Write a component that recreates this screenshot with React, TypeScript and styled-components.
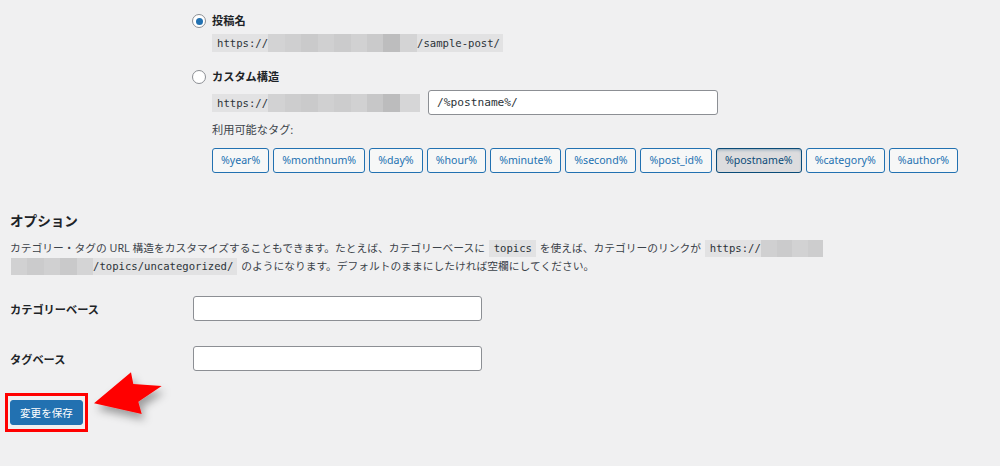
import styled, { createGlobalStyle } from "styled-components";

const GlobalStyle = createGlobalStyle`
    html, body {
        margin: 0;
        padding: 0;
        background: #f0f0f1;
    }
    body {
        font-family: "Noto Sans", "Noto Sans CJK JP", sans-serif;
        color: #1d2327;
    }
    * {
        box-sizing: border-box;
    }
`

const Page = styled.div`
    width: 1000px;
    height: 466px;
    padding: 14px 0 0 10px;
    overflow: hidden;
`

const Choices = styled.fieldset`
    margin: 0 0 0 182px;
    padding: 0;
    border: 0;
    min-width: 0;
`

const RadioRow = styled.label<{ $gap?: number }>`
    display: flex;
    align-items: center;
    gap: 6px;
    height: 14px;
    margin-top: ${(p) => p.$gap ?? 0}px;
    font-size: 11.2px;
    font-weight: 700;
    line-height: 14px;
    color: #1d2327;
`

const Radio = styled.input`
    appearance: none;
    margin: 0;
    width: 14px;
    height: 14px;
    border-radius: 50%;
    border: 1px solid #8c8f94;
    background: #fff;
    display: grid;
    place-items: center;

    &:checked::before {
        content: "";
        width: 7px;
        height: 7px;
        border-radius: 50%;
        background: #2271b1;
    }
`

const Indented = styled.div<{ $gap: number }>`
    display: flex;
    padding-left: 20px;
    margin-top: ${(p) => p.$gap}px;
`

const CustomRow = styled(Indented)`
    align-items: center;
    gap: 8px;
`

const Code = styled.code<{ $width?: number; $tight?: boolean }>`
    display: inline-flex;
    align-items: center;
    height: 18px;
    width: ${(p) => (p.$width ? `${p.$width}px` : "auto")};
    padding: 0 ${(p) => (p.$tight ? 0 : 3)}px 0 5px;
    background: #e2e2e3;
    font-family: "DejaVu Sans Mono", "Liberation Mono", monospace;
    font-size: 10.6px;
    color: #2c3338;
    white-space: pre;
`

const BlurStrip = styled.span`
    display: inline-flex;
    align-self: stretch;
    vertical-align: middle;
`

const BlurCell = styled.span<{ $w: number; $shade: string }>`
    display: inline-block;
    width: ${(p) => p.$w}px;
    height: 100%;
    min-height: 15px;
    background: ${(p) => p.$shade};
`

type Cell = [number, string];

const Blur = ({ cells }: { cells: Cell[] }) => (
    <BlurStrip>
        {cells.map(([w, shade], i) => (
            <BlurCell key={i} $w={w} $shade={shade} />
        ))}
    </BlurStrip>
)

const row1Blur: Cell[] = [
    [17, "#d3d3d4"], [16, "#cfcfd0"], [17, "#cacacb"], [16, "#d0d0d1"],
    [17, "#cbcbcc"], [16, "#d1d1d2"], [16, "#cacacb"], [17, "#bdbdbe"], [17, "#d4d4d5"],
]

const row2Blur: Cell[] = [
    [17, "#d2d2d3"], [16, "#cdcdce"], [17, "#cacacb"], [16, "#d0d0d1"],
    [17, "#cccccd"], [16, "#d1d1d2"], [16, "#c7c7c8"], [17, "#bcbcbd"], [20, "#d6d6d7"],
]

const TextInput = styled.input<{ $width: number }>`
    width: ${(p) => p.$width}px;
    height: 25px;
    margin: 0;
    padding: 0 8px;
    border: 1px solid #8c8f94;
    border-radius: 3px;
    background: #fff;
    font-family: "DejaVu Sans Mono", "Liberation Mono", monospace;
    font-size: 11.2px;
    color: #2c3338;
    outline: none;
`

const TagsLabel = styled(Indented)`
    font-size: 11.2px;
    line-height: 16px;
    color: #3c434a;
`

const TagList = styled(Indented)`
    gap: 4px;
`

const TagButton = styled.button<{ $active?: boolean }>`
    height: 25px;
    margin: 0;
    padding: 0 8px;
    border: 1px solid ${(p) => (p.$active ? "#0a4b78" : "#2271b1")};
    border-radius: 3px;
    background: ${(p) => (p.$active ? "#dcdcde" : "#f6f7f7")};
    box-shadow: ${(p) => (p.$active ? "inset 0 2px 4px -3px #0a4b78" : "none")};
    color: ${(p) => (p.$active ? "#0a4b78" : "#2271b1")};
    font-family: "Noto Sans", sans-serif;
    font-size: 10.6px;
    line-height: 1;
    cursor: pointer;
`

const Heading = styled.h2`
    margin: 38px 0 0;
    font-size: 13.6px;
    font-weight: 700;
    line-height: 20px;
    color: #1d2327;
`

const Description = styled.p`
    margin: 8px 0 0;
    font-size: 10.75px;
    line-height: 18px;
    color: #3c434a;
    white-space: nowrap;
`

const InlineCode = styled.code<{ $open?: "left" | "right" }>`
    display: inline-block;
    height: 17px;
    line-height: 17px;
    padding: 0 ${(p) => (p.$open === "right" ? 0 : 4)}px 0 ${(p) => (p.$open === "left" ? 0 : 5)}px;
    margin: 0 1px;
    background: #e2e2e3;
    font-family: "DejaVu Sans Mono", "Liberation Mono", monospace;
    font-size: 10.6px;
    color: #2c3338;
    white-space: pre;

    & > span {
        height: 17px;
        vertical-align: top;
    }
`

const FormTable = styled.div`
    display: grid;
    grid-template-columns: 183px 1fr;
    align-items: center;
    row-gap: 25px;
    margin-top: 21px;
`

const FieldLabel = styled.label`
    font-size: 11.2px;
    font-weight: 700;
    color: #1d2327;
`

const SaveRow = styled.div`
    position: relative;
    margin: 22px 0 0 -5px;
    width: 200px;
`

const Highlight = styled.div`
    display: inline-block;
    border: 3px solid #ff0000;
    padding: 4px 2px;
`

const SaveButton = styled.button`
    display: block;
    height: 25px;
    padding: 0 9px;
    margin: 0;
    border: 1px solid #2271b1;
    border-radius: 3px;
    background: #2271b1;
    color: #fff;
    font-family: "Noto Sans CJK JP", sans-serif;
    font-size: 10.6px;
    cursor: pointer;
`

const Arrow = styled.svg`
    position: absolute;
    left: 80px;
    top: -28px;
    overflow: visible;
`

const tags = [
    "%year%", "%monthnum%", "%day%", "%hour%", "%minute%",
    "%second%", "%post_id%", "%postname%", "%category%", "%author%",
]

const App = () => {
    return (
        <Page>
            <GlobalStyle />
            <Choices>
                <RadioRow>
                    <Radio type="radio" name="structure" defaultChecked />
                    投稿名
                </RadioRow>
                <Indented $gap={6}>
                    <Code>
                        https://
                        <Blur cells={row1Blur} />
                        /sample-post/
                    </Code>
                </Indented>

                <RadioRow $gap={18}>
                    <Radio type="radio" name="structure" />
                    カスタム構造
                </RadioRow>
                <CustomRow $gap={6}>
                    <Code $width={208} $tight>
                        https://
                        <Blur cells={row2Blur} />
                    </Code>
                    <TextInput $width={290} defaultValue="/%postname%/" />
                </CustomRow>
                <TagsLabel $gap={7}>利用可能なタグ:</TagsLabel>
                <TagList $gap={10}>
                    {tags.map((tag) => (
                        <TagButton key={tag} $active={tag === "%postname%"}>
                            {tag}
                        </TagButton>
                    ))}
                </TagList>
            </Choices>

            <Heading>オプション</Heading>
            <Description>
                カテゴリー・タグの URL 構造をカスタマイズすることもできます。たとえば、カテゴリーベースに{" "}
                <InlineCode>topics</InlineCode> を使えば、カテゴリーのリンクが{" "}
                <InlineCode $open="right">
                    https://
                    <Blur cells={[[16, "#d0d0d1"], [15, "#cbcbcc"], [16, "#d2d2d3"], [15, "#cdcdce"]]} />
                </InlineCode>
                <br />
                <InlineCode $open="left">
                    <Blur cells={[[16, "#d1d1d2"], [17, "#cbcbcc"], [16, "#d0d0d1"], [17, "#c9c9ca"], [16, "#d4d4d5"]]} />
                    /topics/uncategorized/
                </InlineCode>{" "}
                のようになります。デフォルトのままにしたければ空欄にしてください。
            </Description>

            <FormTable>
                <FieldLabel htmlFor="category_base">カテゴリーベース</FieldLabel>
                <TextInput id="category_base" $width={289} />
                <FieldLabel htmlFor="tag_base">タグベース</FieldLabel>
                <TextInput id="tag_base" $width={289} />
            </FormTable>

            <SaveRow>
                <Highlight>
                    <SaveButton type="submit">変更を保存</SaveButton>
                </Highlight>
                <Arrow width="90" height="65" viewBox="0 0 90 65">
                    <defs>
                        <filter id="arrowShadow" x="-30%" y="-30%" width="170%" height="180%">
                            <feDropShadow dx="3" dy="6" stdDeviation="4" floodColor="#000" floodOpacity="0.35" />
                        </filter>
                    </defs>
                    <polygon
                        points="9,38.3 46,7.3 48.3,19 76.7,21 53.3,36.7 56.7,49"
                        fill="#ff0000"
                        filter="url(#arrowShadow)"
                    />
                </Arrow>
            </SaveRow>
        </Page>
    )
}

export default App;
